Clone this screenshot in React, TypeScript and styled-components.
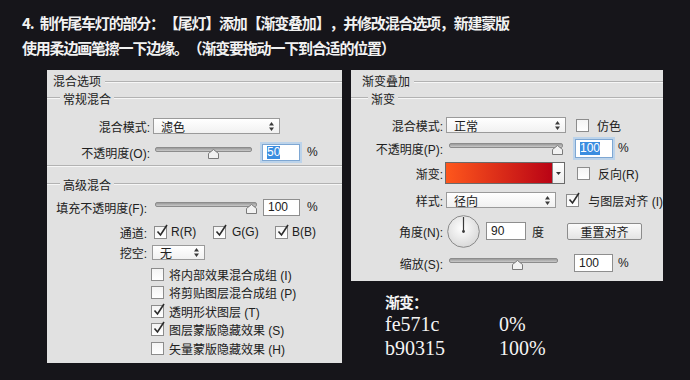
import React from 'react';
import styled, { createGlobalStyle } from 'styled-components';

const GlobalStyle = createGlobalStyle`
  html, body {
    margin: 0;
    padding: 0;
    background: #16151a;
  }

  body {
    width: 690px;
    height: 380px;
    overflow: hidden;
    font-family: "Liberation Sans", "Noto Sans CJK SC", sans-serif;
  }
`;

const Page = styled.div`
  width: 690px;
  height: 380px;
  display: flex;
  flex-direction: column;
`;

const Heading = styled.div`
  height: 70px;
  box-sizing: border-box;
  padding: 10px 0 0 22px;
  color: #f2f2f2;
  font-family: "Noto Sans CJK SC", sans-serif;
  font-weight: 700;
  font-size: 15px;
  letter-spacing: -1.2px;
  line-height: 25px;
  text-spacing-trim: space-all;
`;

const Workspace = styled.div`
  display: flex;
  align-items: flex-start;
  gap: 9px;
  padding-left: 47px;
`;

const Panel = styled.div<{ $width: number; $height: number }>`
  width: ${(p) => p.$width}px;
  height: ${(p) => p.$height}px;
  background: #e1e1e1;
  color: #202020;
  font-size: 12px;
  overflow: hidden;
  display: flex;
  flex-direction: column;
`;

const EtchedLine = styled.div`
  flex: 1;
  height: 0;
  border-top: 1px solid #b2b2b2;
  border-bottom: 1px solid #f6f6f6;
`;

const TitleRow = styled.div<{ $indent: number }>`
  display: flex;
  align-items: center;
  height: 20px;
  padding-left: ${(p) => p.$indent}px;
  font-size: 12px;

  ${EtchedLine} {
    margin: 3px 0 0 4px;
  }
`;

const LegendRow = styled.div<{ $lead: number }>`
  display: flex;
  align-items: center;
  height: 16px;

  & > span {
    padding: 0 3px;
  }

  ${EtchedLine}:first-child {
    flex: 0 0 ${(p) => p.$lead}px;
  }
`;

const Group = styled.div<{ $top: number; $closed?: boolean }>`
  display: flex;
  flex-direction: column;
  padding-top: ${(p) => p.$top}px;
  ${(p) =>
    p.$closed &&
    `
    border-bottom: 1px solid #b2b2b2;
    box-shadow: 0 1px 0 #f6f6f6;
  `}
`;

const Row = styled.div<{ $height: number }>`
  display: flex;
  align-items: center;
  height: ${(p) => p.$height}px;
  white-space: nowrap;
`;

const Label = styled.div<{ $width: number }>`
  flex: 0 0 ${(p) => p.$width}px;
  text-align: right;
  white-space: nowrap;
`;

const Select = styled.div<{ $width: number; $gap: number; $height?: number }>`
  display: flex;
  align-items: center;
  box-sizing: border-box;
  width: ${(p) => p.$width}px;
  height: ${(p) => p.$height ?? 16}px;
  margin-left: ${(p) => p.$gap}px;
  padding: 0 5px 0 7px;
  border: 1px solid #9a9a9a;
  background: linear-gradient(#ffffff, #f1f1f1);
  font-size: 12px;

  svg {
    margin-left: auto;
  }
`;

const Slider = styled.div<{ $width: number; $gap: number }>`
  position: relative;
  flex: 0 0 ${(p) => p.$width}px;
  height: 14px;
  margin-left: ${(p) => p.$gap}px;
`;

const Track = styled.div`
  margin-top: 2px;
  height: 3px;
  border-radius: 2px;
  border: 1px solid #8c8c8c;
  background: linear-gradient(#9a9a9a, #c9c9c9);
`;

const Thumb = styled.svg<{ $pos: number }>`
  position: absolute;
  top: 4px;
  left: calc(${(p) => p.$pos}% - 5px);
`;

const Field = styled.div<{ $width: number; $height: number; $gap: number; $focused?: boolean }>`
  display: flex;
  align-items: center;
  box-sizing: border-box;
  width: ${(p) => p.$width}px;
  height: ${(p) => p.$height}px;
  margin-left: ${(p) => p.$gap}px;
  padding-left: 4px;
  background: #ffffff;
  border: 1px solid ${(p) => (p.$focused ? '#7ea7d3' : '#8e8e8e')};
  box-shadow: ${(p) => (p.$focused ? '0 0 0 2px #bcd3ea' : 'none')};
  font-size: 12px;
`;

const Selected = styled.span`
  background: #3b8de0;
  color: #ffffff;
  line-height: 13px;
`;

const Unit = styled.span<{ $gap: number }>`
  margin-left: ${(p) => p.$gap}px;
  font-size: 12px;
`;

const Box = styled.div<{ $gap: number }>`
  position: relative;
  flex: 0 0 auto;
  width: 11px;
  height: 11px;
  margin-left: ${(p) => p.$gap}px;
  border: 1px solid #8c8c8c;
  background: linear-gradient(#f4f4f4, #ffffff);

  svg {
    position: absolute;
    left: 1px;
    top: -3px;
  }
`;

const BoxText = styled.span<{ $gap: number }>`
  margin-left: ${(p) => p.$gap}px;
  white-space: nowrap;
`;

const Channel = styled.div<{ $width: number }>`
  display: flex;
  align-items: center;
  flex: 0 0 ${(p) => p.$width}px;
`;

const CheckList = styled.div`
  display: flex;
  flex-direction: column;
  margin-top: 3px;
  padding-left: 104px;
`;

const CheckRow = styled.div`
  display: flex;
  align-items: center;
  height: 18.5px;
`;

const Swatch = styled.div`
  display: flex;
  margin-left: 2px;
  height: 20px;
  border: 1px solid #6a6a6a;
`;

const SwatchFill = styled.div`
  width: 106px;
  background: linear-gradient(to right, #fe571c, #b90315);
`;

const SwatchArrow = styled.div`
  width: 11px;
  display: flex;
  align-items: center;
  justify-content: center;
  background: linear-gradient(#ffffff, #ececec);
  border-left: 1px solid #8a8a8a;
`;

const Dial = styled.svg`
  margin-left: 4px;
  flex: 0 0 auto;
`;

const Button = styled.div`
  display: flex;
  align-items: center;
  justify-content: center;
  box-sizing: border-box;
  width: 75px;
  height: 17px;
  margin-left: 23px;
  border: 1px solid #8c8c8c;
  border-radius: 2px;
  background: linear-gradient(#fbfbfb, #e4e4e4);
  font-size: 12px;
`;

const RightColumn = styled.div`
  display: flex;
  flex-direction: column;
`;

const Notes = styled.div`
  margin: 11px 0 0 34px;
  color: #f4f4f4;
`;

const NotesTitle = styled.div`
  font-family: "Noto Sans CJK SC", sans-serif;
  font-weight: 700;
  font-size: 15px;
  letter-spacing: -1px;
  line-height: 20px;
  text-spacing-trim: space-all;
`;

const Stops = styled.div`
  display: grid;
  grid-template-columns: 114px auto;
  font-family: "Liberation Serif", serif;
  font-size: 20px;
  line-height: 24px;
`;

const Arrows = () => (
  <svg width="5" height="9" viewBox="0 0 5 9">
    <path d="M0 3.5 L2.5 0 L5 3.5Z M0 5.5 L2.5 9 L5 5.5Z" fill="#3a3a3a" />
  </svg>
);

const ThumbShape = ({ pos }: { pos: number }) => (
  <Thumb $pos={pos} width="11" height="10" viewBox="0 0 11 10">
    <path d="M0.5 9.5 V4.5 L5.5 0.5 L10.5 4.5 V9.5Z" fill="#f2f2f2" stroke="#7a7a7a" />
  </Thumb>
);

const Range = ({ width, gap, pos }: { width: number; gap: number; pos: number }) => (
  <Slider $width={width} $gap={gap}>
    <Track />
    <ThumbShape pos={pos} />
  </Slider>
);

const Check = ({ checked, gap = 0 }: { checked?: boolean; gap?: number }) => (
  <Box $gap={gap}>
    {checked && (
      <svg width="13" height="13" viewBox="0 0 13 13">
        <path d="M1.5 7.5 L4.5 11 L11 1" fill="none" stroke="#2b2b2b" strokeWidth="1.6" />
      </svg>
    )}
  </Box>
);

const Legend = ({ text, lead }: { text: string; lead: number }) => (
  <LegendRow $lead={lead}>
    <EtchedLine />
    <span>{text}</span>
    <EtchedLine />
  </LegendRow>
);

const BlendingOptions = () => (
  <Panel $width={295} $height={293}>
    <TitleRow $indent={6}>
      混合选项
      <EtchedLine />
    </TitleRow>
    <Legend text="常规混合" lead={13} />
    <Group $top={7} $closed>
      <Row $height={26}>
        <Label $width={103}>混合模式:</Label>
        <Select $width={127} $gap={3}>
          滤色
          <Arrows />
        </Select>
      </Row>
      <Row $height={26}>
        <Label $width={103}>不透明度(O):</Label>
        <Range width={97} gap={5} pos={60} />
        <Field $width={38} $height={17} $gap={10} $focused>
          <Selected>50</Selected>
        </Field>
        <Unit $gap={7}>%</Unit>
      </Row>
    </Group>
    <Group $top={10}>
      <Legend text="高级混合" lead={13} />
      <Row $height={30}>
        <Label $width={100}>填充不透明度(F):</Label>
        <Range width={102} gap={8} pos={94} />
        <Field $width={37} $height={17} $gap={6}>
          100
        </Field>
        <Unit $gap={7}>%</Unit>
      </Row>
      <Row $height={20}>
        <Label $width={100}>通道:</Label>
        <Channel $width={66}>
          <Check checked gap={7} />
          <BoxText $gap={4}>R(R)</BoxText>
        </Channel>
        <Channel $width={62}>
          <Check checked />
          <BoxText $gap={6}>G(G)</BoxText>
        </Channel>
        <Channel $width={60}>
          <Check checked />
          <BoxText $gap={4}>B(B)</BoxText>
        </Channel>
      </Row>
      <Row $height={20}>
        <Label $width={100}>挖空:</Label>
        <Select $width={53} $gap={5} $height={15}>
          无
          <Arrows />
        </Select>
      </Row>
      <CheckList>
        <CheckRow>
          <Check />
          <BoxText $gap={5}>将内部效果混合成组 (I)</BoxText>
        </CheckRow>
        <CheckRow>
          <Check />
          <BoxText $gap={5}>将剪贴图层混合成组 (P)</BoxText>
        </CheckRow>
        <CheckRow>
          <Check checked />
          <BoxText $gap={5}>透明形状图层 (T)</BoxText>
        </CheckRow>
        <CheckRow>
          <Check checked />
          <BoxText $gap={5}>图层蒙版隐藏效果 (S)</BoxText>
        </CheckRow>
        <CheckRow>
          <Check />
          <BoxText $gap={5}>矢量蒙版隐藏效果 (H)</BoxText>
        </CheckRow>
      </CheckList>
    </Group>
  </Panel>
);

const GradientOverlay = () => (
  <Panel $width={312} $height={211}>
    <TitleRow $indent={11}>
      渐变叠加
      <EtchedLine />
    </TitleRow>
    <Legend text="渐变" lead={17} />
    <Group $top={7}>
      <Row $height={24}>
        <Label $width={92}>混合模式:</Label>
        <Select $width={120} $gap={3}>
          正常
          <Arrows />
        </Select>
        <Check gap={10} />
        <BoxText $gap={8}>仿色</BoxText>
      </Row>
      <Row $height={22}>
        <Label $width={92}>不透明度(P):</Label>
        <Range width={114} gap={6} pos={95} />
        <Field $width={38} $height={19} $gap={12} $focused>
          <Selected>100</Selected>
        </Field>
        <Unit $gap={5}>%</Unit>
      </Row>
      <Row $height={28}>
        <Label $width={92}>渐变:</Label>
        <Swatch>
          <SwatchFill />
          <SwatchArrow>
            <svg width="5" height="3" viewBox="0 0 5 3">
              <path d="M0 0 L5 0 L2.5 3Z" fill="#333" />
            </svg>
          </SwatchArrow>
        </Swatch>
        <Check gap={12} />
        <BoxText $gap={8}>反向(R)</BoxText>
      </Row>
      <Row $height={26}>
        <Label $width={92}>样式:</Label>
        <Select $width={120} $gap={3}>
          径向
          <Arrows />
        </Select>
        <Check checked gap={10} />
        <BoxText $gap={9}>与图层对齐 (I)</BoxText>
      </Row>
      <Row $height={36}>
        <Label $width={92}>角度(N):</Label>
        <Dial width="33" height="33" viewBox="0 0 33 33">
          <defs>
            <radialGradient id="dialFill" cx="45%" cy="40%" r="65%">
              <stop offset="0%" stopColor="#ffffff" />
              <stop offset="100%" stopColor="#d6d6d6" />
            </radialGradient>
          </defs>
          <circle cx="16.5" cy="16.5" r="15.8" fill="url(#dialFill)" stroke="#8a8a8a" />
          <line x1="16.5" y1="16.5" x2="16.5" y2="2" stroke="#3a3a3a" strokeWidth="1.2" />
          <circle cx="16.5" cy="16.5" r="1.4" fill="#3a3a3a" />
        </Dial>
        <Field $width={40} $height={18} $gap={6}>
          90
        </Field>
        <Unit $gap={6}>度</Unit>
        <Button>重置对齐</Button>
      </Row>
      <Row $height={28}>
        <Label $width={92}>缩放(S):</Label>
        <Range width={109} gap={6} pos={62} />
        <Field $width={39} $height={18} $gap={16}>
          100
        </Field>
        <Unit $gap={5}>%</Unit>
      </Row>
    </Group>
  </Panel>
);

const App = () => {
  return (
    <Page>
      <GlobalStyle />
      <Heading>
        4.{'\u2002'}制作尾车灯的部分：【尾灯】添加【渐变叠加】，并修改混合选项，新建蒙版
        <br />
        使用柔边画笔擦一下边缘。（渐变要拖动一下到合适的位置）
      </Heading>
      <Workspace>
        <BlendingOptions />
        <RightColumn>
          <GradientOverlay />
          <Notes>
            <NotesTitle>渐变：</NotesTitle>
            <Stops>
              <span>fe571c</span>
              <span>0%</span>
              <span>b90315</span>
              <span>100%</span>
            </Stops>
          </Notes>
        </RightColumn>
      </Workspace>
    </Page>
  );
};

export default App;
